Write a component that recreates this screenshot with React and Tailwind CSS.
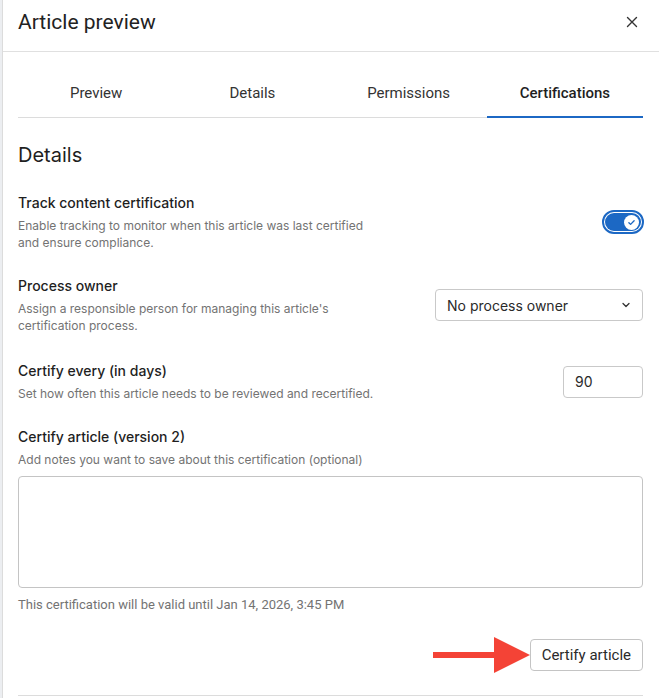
import { useState } from "react";

const tabs = ["Preview", "Details", "Permissions", "Certifications"];

const Toggle = ({ on, onChange }) => (
  <button
    type="button"
    onClick={() => onChange(!on)}
    className="w-[42px] h-[24px] rounded-full border-2 border-[#1c68c4] bg-white p-[1px] shrink-0 translate-x-[1px]"
  >
    <div className="w-full h-full rounded-full bg-[#1c68c4] flex items-center justify-end pr-[2px]">
      <div className="w-[15px] h-[15px] rounded-full bg-white flex items-center justify-center">
        <svg width="9" height="9" viewBox="0 0 12 12" fill="none">
          <path d="M2.5 6.2l2.3 2.3 4.7-4.9" stroke="#1c68c4" strokeWidth="1.8" strokeLinecap="round" strokeLinejoin="round" />
        </svg>
      </div>
    </div>
  </button>
);

const Field = ({ title, desc, children, className = "" }) => (
  <div className={"flex items-center justify-between gap-6 " + className}>
    <div className="max-w-[360px]">
      <div className="text-[14px] leading-[20px] font-medium text-[#1f1f1f]">{title}</div>
      <div className="mt-1 text-[12px] leading-[17px] text-[#737373]">{desc}</div>
    </div>
    {children}
  </div>
);

export default function App() {
  const [active, setActive] = useState(3);
  const [tracking, setTracking] = useState(true);
  const [days, setDays] = useState("90");
  const [notes, setNotes] = useState("");

  return (
    <div className="w-[659px] h-[698px] overflow-hidden flex bg-white font-['Inter',sans-serif]">
      <div className="w-[2px] bg-[#eceef1] shrink-0" />
      <div className="flex-1 border-l border-[#dcdcdc] flex flex-col">
        {/* header */}
        <div className="h-[52px] border-b border-[#e0e0e0] flex items-start justify-between pl-[15px] pr-[21px] pt-[7px] shrink-0">
          <h1 className="text-[21px] leading-[30px] text-[#222] font-['Roboto',sans-serif]">Article preview</h1>
          <button className="mt-[9px]">
            <svg width="12" height="12" viewBox="0 0 12 12">
              <path d="M1.5 1.5l9 9M10.5 1.5l-9 9" stroke="#333" strokeWidth="1.4" strokeLinecap="round" />
            </svg>
          </button>
        </div>

        <div className="pl-[15px] pr-[16px]">
          {/* tabs */}
          <div className="mt-[16px] grid grid-cols-4 border-b border-[#dcdcdc] font-['Roboto',sans-serif]">
            {tabs.map((t, i) => (
              <button
                key={t}
                onClick={() => setActive(i)}
                className={
                  "h-[50px] pt-[3px] text-[15px] -mb-px border-b-2 " +
                  (i === active ? "border-[#1c68c4] text-[#1f1f1f] font-medium" : "border-transparent text-[#333]")
                }
              >
                {t}
              </button>
            ))}
          </div>

          <h2 className="mt-[23px] text-[20px] leading-[28px] text-[#1f1f1f]">Details</h2>

          <div className="mt-[24px] flex flex-col">
            <Field
              title="Track content certification"
              desc="Enable tracking to monitor when this article was last certified and ensure compliance."
            >
              <Toggle on={tracking} onChange={setTracking} />
            </Field>

            <Field
              className="mt-[25px]"
              title="Process owner"
              desc="Assign a responsible person for managing this article's certification process."
            >
              <div className="w-[208px] h-[32px] border border-[#c9c9c9] rounded-[4px] flex items-center justify-between pl-[11px] pr-[11px] text-[14px] text-[#2a2a2a] shrink-0">
                <span>No process owner</span>
                <svg width="10" height="10" viewBox="0 0 10 10" fill="none">
                  <path d="M2 3.5l3 3 3-3" stroke="#333" strokeWidth="1.3" strokeLinecap="round" strokeLinejoin="round" />
                </svg>
              </div>
            </Field>

            <Field
              className="mt-[27px]"
              title="Certify every (in days)"
              desc="Set how often this article needs to be reviewed and recertified."
            >
              <input
                value={days}
                onChange={(e) => setDays(e.target.value)}
                className="w-[80px] h-[32px] border border-[#c9c9c9] rounded-[4px] px-[11px] text-[14px] text-[#2a2a2a] outline-none shrink-0"
              />
            </Field>

            <div className="mt-[25px]">
              <div className="text-[14px] leading-[20px] font-medium text-[#1f1f1f]">Certify article (version 2)</div>
              <div className="mt-1 text-[12px] leading-[17px] text-[#737373]">
                Add notes you want to save about this certification (optional)
              </div>
              <textarea
                value={notes}
                onChange={(e) => setNotes(e.target.value)}
                className="mt-[8px] block w-full h-[112px] border border-[#c4c4c4] rounded-[4px] resize-none outline-none p-2 text-[14px]"
              />
              <div className="mt-[8px] text-[13px] leading-[18px] text-[#737373] font-['Roboto',sans-serif]">
                This certification will be valid until Jan 14, 2026, 3:45 PM
              </div>
            </div>
          </div>

          <div className="mt-[25px] flex justify-end">
            <div className="relative">
              <div className="absolute right-full top-1/2 -translate-y-1/2 flex items-center">
                <div className="w-[61px] h-[6px] bg-[#f44336]" />
                <div className="w-0 h-0 border-y-[18px] border-y-transparent border-l-[36px] border-l-[#f44336]" />
              </div>
              <button className="h-[32px] px-[11px] border border-[#c4c4c4] rounded-[4px] text-[15px] text-[#2a2a2a] font-['Roboto',sans-serif] bg-white">
                Certify article
              </button>
            </div>
          </div>

          <div className="mt-[24px] border-b border-[#dcdcdc]" />
        </div>
      </div>
    </div>
  );
}
